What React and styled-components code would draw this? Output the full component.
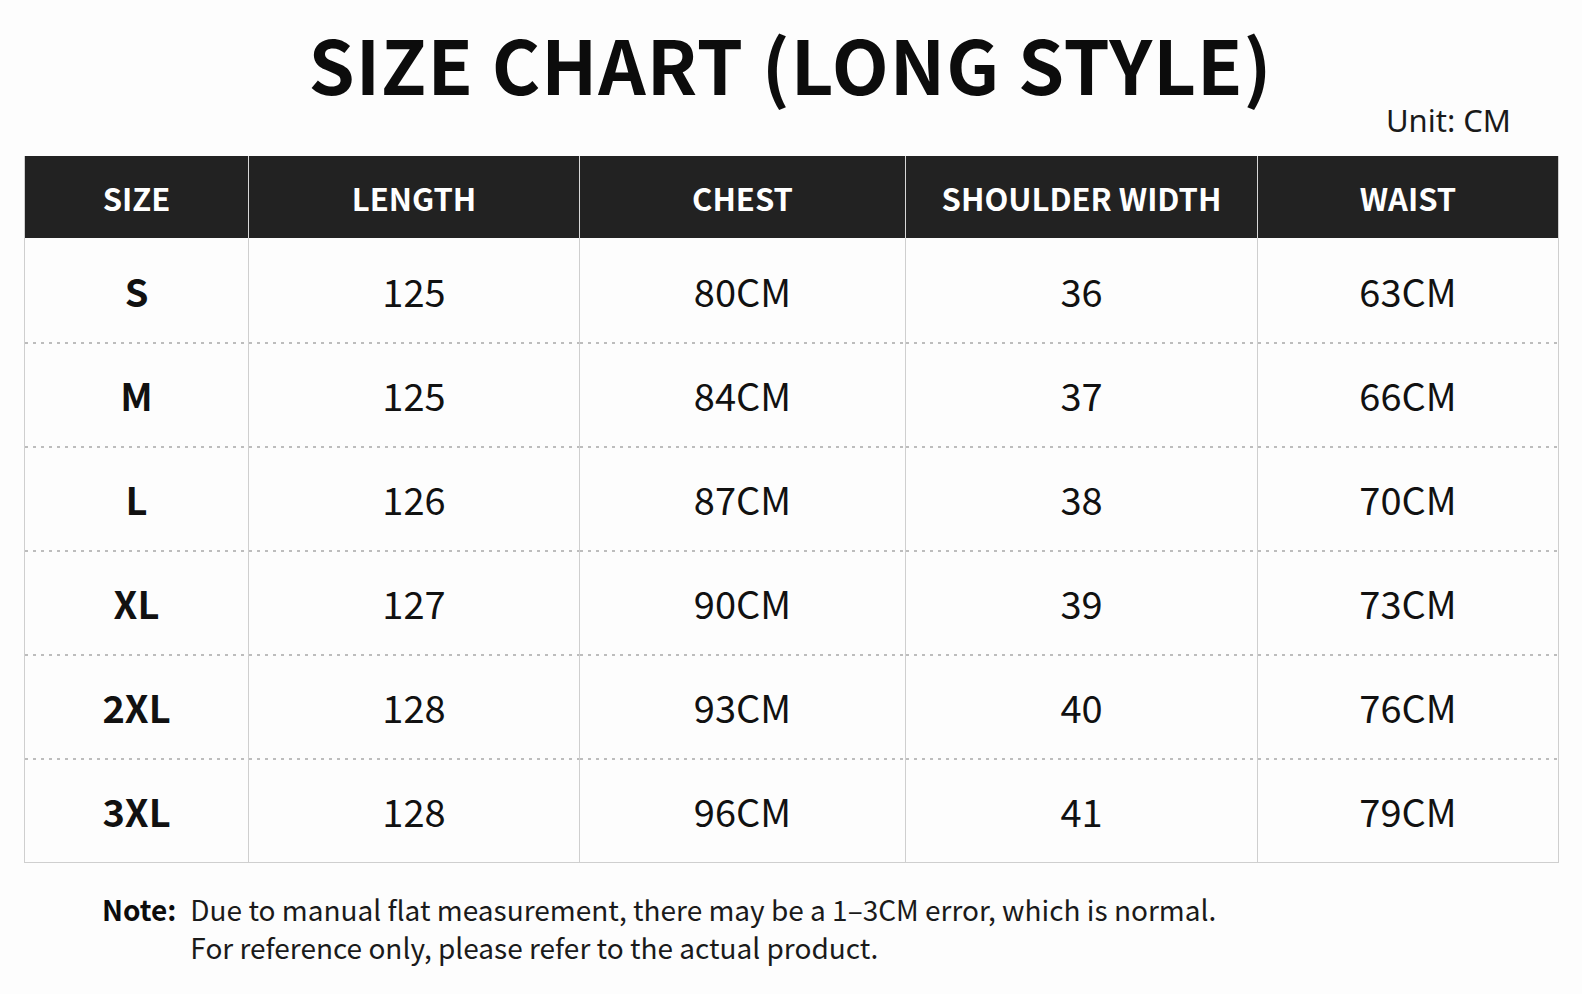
import styled, { createGlobalStyle } from 'styled-components'

const GlobalStyle = createGlobalStyle`
  html, body {
    margin: 0;
    padding: 0;
    background: #fdfdfd;
  }
  body {
    font-family: 'Noto Sans CJK KR', 'Noto Sans', sans-serif;
    color: #111;
  }
`

const columns = [
  { key: 'size', label: 'SIZE', width: 223 },
  { key: 'length', label: 'LENGTH', width: 331 },
  { key: 'chest', label: 'CHEST', width: 326 },
  { key: 'shoulder', label: 'SHOULDER WIDTH', width: 352 },
  { key: 'waist', label: 'WAIST', width: 301 },
]

const rows = [
  { size: 'S', length: '125', chest: '80CM', shoulder: '36', waist: '63CM' },
  { size: 'M', length: '125', chest: '84CM', shoulder: '37', waist: '66CM' },
  { size: 'L', length: '126', chest: '87CM', shoulder: '38', waist: '70CM' },
  { size: 'XL', length: '127', chest: '90CM', shoulder: '39', waist: '73CM' },
  { size: '2XL', length: '128', chest: '93CM', shoulder: '40', waist: '76CM' },
  { size: '3XL', length: '128', chest: '96CM', shoulder: '41', waist: '79CM' },
]

const Page = styled.div`
  width: 1582px;
  height: 994px;
  padding: 0 25px 0 24px;
  box-sizing: border-box;
  display: flex;
  flex-direction: column;
`

const Title = styled.h1`
  margin: 18px 0 0;
  text-align: center;
  font-size: 74px;
  line-height: 90px;
  font-weight: 700;
  letter-spacing: 1px;
  color: #0c0c0c;
`

const Unit = styled.div`
  align-self: flex-end;
  margin: -6px 46px 0 0;
  font-family: 'Noto Sans', sans-serif;
  font-size: 31px;
  line-height: 36px;
  color: #1a1a1a;
`

const Table = styled.div`
  margin-top: 18px;
  display: grid;
  grid-template-columns: ${columns.map((c) => `${c.width}px`).join(' ')};
  grid-template-rows: 82px;
  grid-auto-rows: 104px;
  border: 1px solid #cfcfcf;
  border-top: none;
  width: fit-content;
`

const HeadCell = styled.div`
  background: #222222;
  color: #fff;
  display: flex;
  align-items: center;
  justify-content: center;
  font-size: 31px;
  font-weight: 700;
  border-left: ${(p) => (p.$first ? 'none' : '1px solid #d8d8d8')};
`

const Cell = styled.div`
  display: flex;
  align-items: center;
  justify-content: center;
  font-size: 38px;
  font-weight: ${(p) => (p.$bold ? 700 : 400)};
  color: #111;
  border-left: ${(p) => (p.$first ? 'none' : '1px solid #cfcfcf')};
  background: ${(p) =>
    p.$topRow
      ? 'none'
      : 'linear-gradient(to right, #bdbdbd 3px, transparent 3px) 0 0 / 8px 2px repeat-x'};
`

const Note = styled.div`
  margin: 27px 0 0 78px;
  display: grid;
  grid-template-columns: auto 1fr;
  column-gap: 14px;
  font-size: 28px;
  line-height: 38px;
  color: #1a1a1a;
`

const NoteLabel = styled.span`
  font-weight: 700;
  color: #0c0c0c;
`

const NoteLine = styled.span`
  grid-column: 2;
`

const App = () => {
  return (
    <>
      <GlobalStyle />
      <Page>
        <Title>SIZE CHART (LONG STYLE)</Title>
        <Unit>Unit: CM</Unit>
        <Table>
          {columns.map((col, i) => (
            <HeadCell key={col.key} $first={i === 0}>
              {col.label}
            </HeadCell>
          ))}
          {rows.map((row, r) =>
            columns.map((col, i) => (
              <Cell key={`${r}-${col.key}`} $first={i === 0} $bold={i === 0} $topRow={r === 0}>
                {row[col.key]}
              </Cell>
            ))
          )}
        </Table>
        <Note>
          <NoteLabel>Note:</NoteLabel>
          <NoteLine>Due to manual flat measurement, there may be a 1–3CM error, which is normal.</NoteLine>
          <NoteLine>For reference only, please refer to the actual product.</NoteLine>
        </Note>
      </Page>
    </>
  )
}

export default App
